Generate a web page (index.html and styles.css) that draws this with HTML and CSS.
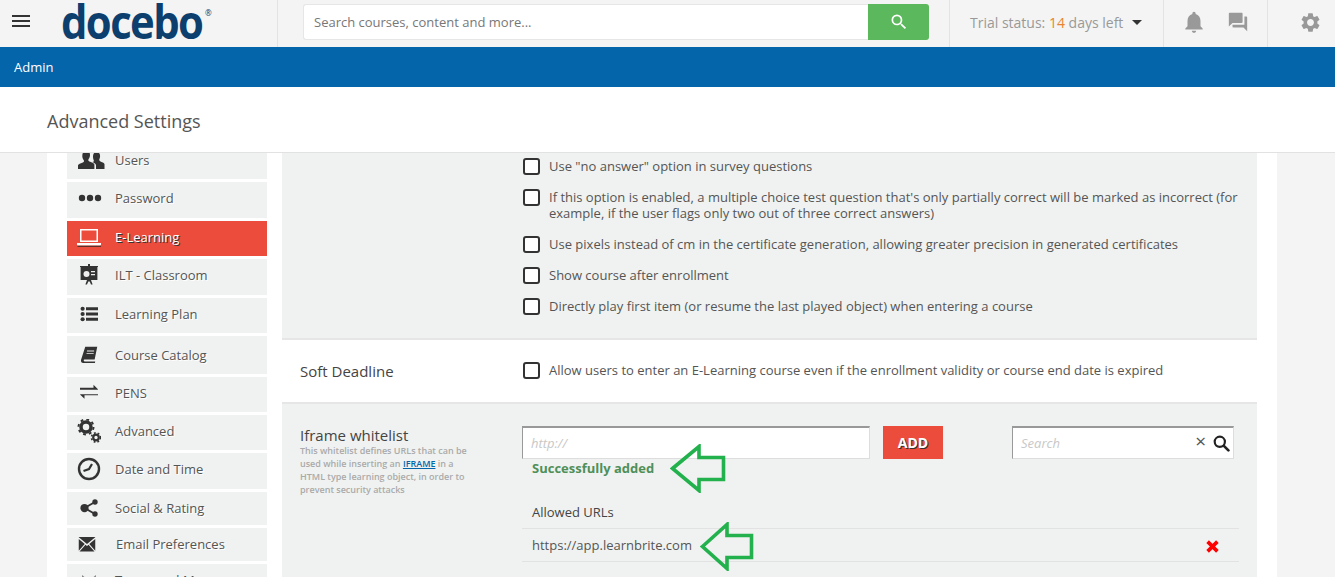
FILE: index.html
```html
<!DOCTYPE html>
<html lang="en">
<head>
<meta charset="utf-8">
<title>Advanced Settings</title>
<link rel="stylesheet" href="styles.css">
</head>
<body>
<header class="topbar">
  <div class="brand">
    <div class="burger"><span></span><span></span><span></span></div>
    <div class="logo">docebo<sup class="reg">®</sup></div>
  </div>
  <div class="searchbox">
    <input class="search-input" type="text" placeholder="Search courses, content and more...">
    <button class="search-btn" type="button"><svg viewBox="0 0 24 24" width="20" height="20"><path fill="#fff" d="M15.5 14h-.79l-.28-.27A6.471 6.471 0 0016 9.5 6.5 6.5 0 109.5 16c1.61 0 3.09-.59 4.23-1.57l.27.28v.79l5 4.99L20.49 19l-4.99-5zm-6 0C7.01 14 5 11.99 5 9.5S7.01 5 9.5 5 14 7.01 14 9.5 11.99 14 9.5 14z"/></svg></button>
  </div>
  <div class="trial"><span>Trial status: <span class="trial-num">14</span> days left</span><i class="caret"></i></div>
  <div class="notify">
    <svg viewBox="0 0 24 24" width="26" height="26"><path fill="#999" d="M12 22c1.1 0 2-.9 2-2h-4c0 1.1.89 2 2 2zm6-6v-5c0-3.07-1.64-5.64-4.5-6.32V4c0-.83-.67-1.5-1.5-1.5s-1.5.67-1.5 1.5v.68C7.63 5.36 6 7.92 6 11v5l-2 2v1h16v-1l-2-2z"/></svg>
    <svg viewBox="0 0 24 24" width="22" height="22"><path fill="#999" d="M21 6h-2v9H6v2c0 .55.45 1 1 1h11l4 4V7c0-.55-.45-1-1-1zm-4 6V3c0-.55-.45-1-1-1H3c-.55 0-1 .45-1 1v14l4-4h10c.55 0 1-.45 1-1z"/></svg>
  </div>
  <div class="gear">
    <svg viewBox="0 0 24 24" width="23" height="23"><path fill="#999" d="M19.14 12.94c.04-.3.06-.61.06-.94 0-.32-.02-.64-.07-.94l2.03-1.58a.49.49 0 00.12-.61l-1.92-3.32a.488.488 0 00-.59-.22l-2.39.96c-.5-.38-1.03-.7-1.62-.94l-.36-2.54a.484.484 0 00-.48-.41h-3.84c-.24 0-.43.17-.47.41l-.36 2.54c-.59.24-1.13.57-1.62.94l-2.39-.96c-.22-.08-.47 0-.59.22L2.74 8.87c-.12.21-.08.47.12.61l2.03 1.58c-.05.3-.09.63-.09.94s.02.64.07.94l-2.03 1.58a.49.49 0 00-.12.61l1.92 3.32c.12.22.37.29.59.22l2.39-.96c.5.38 1.03.7 1.62.94l.36 2.54c.05.24.24.41.48.41h3.84c.24 0 .44-.17.47-.41l.36-2.54c.59-.24 1.13-.56 1.62-.94l2.39.96c.22.08.47 0 .59-.22l1.92-3.32c.12-.22.07-.47-.12-.61l-2.01-1.58zM12 15.6c-1.98 0-3.6-1.62-3.6-3.6s1.62-3.6 3.6-3.6 3.6 1.62 3.6 3.6-1.62 3.6-3.6 3.6z"/></svg>
  </div>
</header>
<nav class="adminbar">Admin</nav>
<div class="titlebar"><h1 class="title">Advanced Settings</h1></div>
<main class="main">
  <div class="panel">
    <aside class="sidebar">
      <a class="item item-users"><svg class="ico" viewBox="0 0 28 18"><path fill="#333" d="M1 18v-3.500c0-1.600 4-2.600 5.600-3.600.6-.4.5-1.400 0-2-.9-1.100-1.300-2.600-1.300-4C5.300 1.300 7 0 9.200 0S13 1.300 13 3.900c0 1.400-.4 2.900-1.300 4-.5.6-.6 1.600 0 2 1.600 1 5.700 2 5.700 3.600V18z"/><path fill="#333" d="M19 18v-3.700c0-1.300-1.800-2.400-3.400-3.200.9-.5 1.400-.5 1.200-1.500-.5-1.200-.8-2.500-.8-3.700C16 2.500 17.500 1 19.600 1s3.500 1.500 3.500 3.900c0 1.200-.3 2.500-.8 3.700-.3.8.1 1.200.8 1.600 1.600.9 4.400 1.500 4.400 3V18z"/></svg><span>Users</span></a>
      <a class="item item-up item-dots"><svg class="ico" viewBox="0 0 24 24"><circle cx="4" cy="12" r="3.200" fill="#333"/><circle cx="12" cy="12" r="3.200" fill="#333"/><circle cx="20" cy="12" r="3.200" fill="#333"/></svg><span>Password</span></a>
      <a class="item item-active"><svg class="ico" viewBox="0 0 24 24"><g fill="#fff"><path d="M3 4h18v13H3zm1.500 1.500v10h15v-10z" fill-rule="evenodd"/><path d="M0 18h24v1.200c0 .7-.5 1.300-1.200 1.300H1.200C.5 20.500 0 19.900 0 19.200z"/></g><path fill="#222" d="M.5 20.800h23.500v.9H.5z"/></svg><span>E-Learning</span></a>
      <a class="item item-up"><svg class="ico" viewBox="0 0 24 24"><path fill="#333" d="M3 3h8V1h2v2h8v1h-.6v13H14l1.600 4.500H14l-1.300-3H11.300L10 21.500H8.400L10 17H3.600V4H3z"/><circle cx="9.500" cy="11" r="3" fill="#eee"/><path fill="#eee" d="M14 8h4v1.200h-4zm0 3h4v1.200h-4z"/></svg><span>ILT - Classroom</span></a>
      <a class="item item-sm"><svg class="ico" viewBox="0 0 24 24"><g fill="#333"><circle cx="3.500" cy="5" r="2.800"/><circle cx="3.500" cy="12" r="2.800"/><circle cx="3.500" cy="19" r="2.800"/><path d="M8 3h16v4H8zm0 7h16v4H8zm0 7h16v4H8z"/></g></svg><span>Learning Plan</span></a>
      <a class="item item-sm item-low"><svg class="ico" viewBox="0 0 24 24"><path fill="#333" d="M7 1h16l-3.500 17H6.500c-1.200 0-1.500.6-1.500 1.200 0 .8.500 1.300 1.500 1.300h13.800l-.4 2H5C2.500 23 1 21.300 1.300 18.500z"/><path fill="#eee" d="M9.300 6h9.500v1.200H9.300zm-.6 3.500h9.500v1.200H8.700z"/></svg><span>Course Catalog</span></a>
      <a class="item item-sm"><svg class="ico" viewBox="0 0 24 24"><g fill="#333"><path d="M0 5h18V1l6 6-.4.500H0z"/><path d="M24 15H6v4.500L0 14l.4-.500H24z"/></g></svg><span>PENS</span></a>
      <a class="item"><svg class="ico" viewBox="0 0 24 24"><g fill="none" stroke="#333"><circle cx="9" cy="8" r="5" stroke-width="3.500"/><circle cx="9" cy="8" r="7.500" stroke-width="2" stroke-dasharray="2.800 3.100"/><circle cx="19" cy="18.500" r="2.800" stroke-width="2.200"/><circle cx="19" cy="18.500" r="4.600" stroke-width="1.600" stroke-dasharray="1.800 2"/></g></svg><span>Advanced</span></a>
      <a class="item item-up"><svg class="ico" viewBox="0 0 24 24"><circle cx="12" cy="12" r="10" fill="none" stroke="#333" stroke-width="2.400"/><path fill="none" stroke="#333" stroke-width="2.200" d="M6.500 14l5.500-2 3-5"/></svg><span>Date and Time</span></a>
      <a class="item item-sm item-low"><svg class="ico" viewBox="0 0 24 24"><path fill="none" stroke="#333" stroke-width="2.500" d="M20 4L6 12l14 8"/><circle cx="6" cy="12" r="5.500" fill="#333"/><circle cx="20" cy="4" r="3.600" fill="#333"/><circle cx="20" cy="20" r="3.600" fill="#333"/></svg><span>Social &amp; Rating</span></a>
      <a class="item item-mail"><svg class="ico" viewBox="0 0 24 24"><path fill="#333" d="M1 3l11 9 11-9v-.5H1zM1 5.200V21l8-9zM23 5.200V21l-8-9zM10 13l-8 9h20l-8-9-2 1.700z"/></svg><span>Email Preferences</span></a>
      <a class="item item-last"><svg class="ico" viewBox="0 0 24 24"><path fill="#888" d="M5 4l5 4H5zm14 0l-5 4h5z"/></svg><span>Terms and Menu</span></a>
    </aside>
    <section class="content">
      <div class="sec sec-top">
        <div class="sec-label"></div>
        <div class="options">
          <label class="opt"><i class="box"></i><span>Use "no answer" option in survey questions</span></label>
          <label class="opt"><i class="box"></i><span>If this option is enabled, a multiple choice test question that's only partially correct will be marked as incorrect (for example, if the user flags only two out of three correct answers)</span></label>
          <label class="opt"><i class="box"></i><span>Use pixels instead of cm in the certificate generation, allowing greater precision in generated certificates</span></label>
          <label class="opt"><i class="box"></i><span>Show course after enrollment</span></label>
          <label class="opt"><i class="box"></i><span>Directly play first item (or resume the last played object) when entering a course</span></label>
        </div>
      </div>
      <div class="sec sec-soft">
        <div class="sec-label"><h3 class="soft-title">Soft Deadline</h3></div>
        <div class="options">
          <label class="opt"><i class="box"></i><span>Allow users to enter an E-Learning course even if the enrollment validity or course end date is expired</span></label>
        </div>
      </div>
      <div class="sec sec-iframe">
        <div class="sec-label">
          <h3 class="iframe-title">Iframe whitelist</h3>
          <p class="iframe-desc">This whitelist defines URLs that can be used while inserting an <a class="iframe-link">IFRAME</a> in a HTML type learning object, in order to prevent security attacks</p>
        </div>
        <div class="iframe-body">
          <div class="url-row">
            <input class="field field-url" type="text" placeholder="http://">
            <button class="add-btn" type="button">ADD</button>
            <div class="field field-search">
              <input class="search-inner" type="text" placeholder="Search">
              <span class="clear">×</span>
              <svg viewBox="0 0 18 18" width="17" height="17"><circle cx="7.200" cy="7.200" r="5.400" fill="none" stroke="#222" stroke-width="2.300"/><path stroke="#222" stroke-width="2.800" stroke-linecap="round" d="M11.500 11.500l4.800 4.800"/></svg>
            </div>
          </div>
          <div class="success">Successfully added</div>
          <div class="allowed">Allowed URLs</div>
          <div class="url-item">
            <span>https://app.learnbrite.com</span>
            <svg class="del" viewBox="0 0 12 12" width="13" height="13"><path stroke="#f00" stroke-width="3.400" d="M1.500 1.500l9 9m0-9l-9 9"/></svg>
          </div>
        </div>
      </div>
    </section>
  </div>
  <svg class="arrow arrow-one" viewBox="0 0 56 49" width="56" height="49"><path fill="none" stroke="#22b14c" stroke-width="3.600" d="M2.500 24.500L29 2.500v11h24.500v22H29V46.500z"/></svg>
  <svg class="arrow arrow-two" viewBox="0 0 54 49" width="54" height="49"><path fill="none" stroke="#22b14c" stroke-width="3.600" d="M2.500 24.500L27 2.500v11h24.500v22H27V46.500z"/></svg>
</main>
</body>
</html>
```
FILE: styles.css
```css
* { box-sizing: border-box; }
html, body { margin: 0; padding: 0; height: 577px; overflow: hidden; }
body { font-family: "Open Sans", "Liberation Sans", sans-serif; font-size: 13px; color: #555; background: #f4f4f4; }

.topbar { display: flex; height: 47px; background: #f4f4f4; }
.brand { display: flex; width: 278px; border-right: 1px solid #e3e3e3; }
.burger { display: flex; flex-direction: column; justify-content: space-between; width: 18px; height: 12px; margin: 15px 0 0 12px; }
.burger span { display: block; height: 2px; background: #333; }
.logo { margin: -7px 0 0 31px; height: 56px; font-size: 47px; line-height: 56px; font-weight: 700; letter-spacing: -1.8px; color: #0c3f6e; white-space: nowrap; transform: scaleX(.89); transform-origin: left top; }
.reg { font-size: 9px; font-weight: 400; letter-spacing: 0; vertical-align: 23px; line-height: 0; margin-left: 3px; }

.searchbox { display: flex; width: 626px; height: 36px; margin: 4px 20px 0 25px; }
.search-input { flex: 1; height: 36px; padding: 0 10px; border: 1px solid #e6e6e6; border-right: 0; border-radius: 3px 0 0 3px; background: #fff; font: 13px "Open Sans", sans-serif; color: #555; }
.search-input::placeholder { color: #777; opacity: 1; }
.search-btn { display: flex; align-items: center; justify-content: center; width: 61px; height: 36px; padding: 0; border: 0; border-radius: 0 3px 3px 0; background: #5cb85c; }

.trial { display: flex; align-items: center; width: 214px; height: 47px; padding: 0 0 3px 20px; border-left: 1px solid #e3e3e3; font-size: 14px; color: #999; white-space: pre; }
.trial-num { color: #e8842c; }
.caret { width: 0; height: 0; margin-left: 9px; border-left: 5px solid transparent; border-right: 5px solid transparent; border-top: 5px solid #333; }
.notify { display: flex; align-items: center; gap: 20px; width: 104px; height: 47px; padding: 0 0 3px 17px; border-left: 1px solid #e3e3e3; }
.gear { display: flex; align-items: center; flex: 1; height: 47px; padding: 0 0 3px 31px; border-left: 1px solid #e3e3e3; }

.adminbar { display: flex; align-items: center; height: 40px; padding-left: 14px; background: #0565aa; color: #fff; font-size: 13px; }
.titlebar { display: flex; align-items: center; height: 66px; padding: 3px 0 0 47px; background: #fff; border-bottom: 1px solid #e2e2e2; }
.title { margin: 0; font-size: 18px; font-weight: 400; color: #555; }

.main { position: relative; height: 424px; overflow: hidden; }
.panel { display: grid; grid-template-columns: 200px 975px; column-gap: 15px; width: 1230px; height: 424px; margin-left: 47px; padding: 0 20px; background: #fff; }

.sidebar { display: grid; grid-template-rows: 26px 36px 35px 36px 35px 38px 35px 35px 36px 33px 33px 40px; row-gap: 3px; align-content: start; }
.item { display: flex; align-items: center; gap: 14px; padding: 0 0 3px 10px; background: #f0f2f1; color: #555; text-shadow: 1px 1px 0 #fff; overflow: hidden; }
.ico { flex: none; width: 24px; height: 24px; }
.item-up { padding-bottom: 4px; }
.item-low { padding-bottom: 1px; }
.item-dots .ico { margin: 0 -1px 0 1px; }
.item-sm { gap: 17px; padding-left: 13px; }
.item-sm .ico { width: 18px; height: 18px; }
.item-users { gap: 10px; padding-bottom: 12px; }
.item-users .ico { width: 28px; height: 18px; }
.item-active { background: #eb4c3c; color: #fff; text-shadow: 1px 1px 0 #333; }
.item-mail { gap: 20px; padding: 0 0 2px 11px; }
.item-mail .ico { width: 18px; height: 18px; }
.item-last { align-items: flex-start; padding-top: 7px; }

.sec { display: grid; grid-template-columns: 240px 1fr; }
.sec-label { padding-left: 18px; }
.options { display: flex; flex-direction: column; gap: 14px; padding-left: 1px; }
.opt { display: flex; gap: 9px; line-height: 16px; min-height: 17px; color: #555; }
.box { flex: none; width: 17px; height: 17px; border: 2px solid #333; border-radius: 3px; background: #fff; }
.opt span { padding-bottom: 1px; padding-right: 18px; }

.sec-top { height: 187px; padding-top: 5px; background: #f0f2f1; border-bottom: 2px solid #e6e6e6; }
.sec-soft { height: 64px; padding-top: 22px; background: #fff; border-bottom: 2px solid #e6e6e6; }
.soft-title { margin: 0; font-size: 15px; line-height: 18px; font-weight: 500; color: #444; }
.sec-iframe { height: 173px; padding-top: 22px; background: #f0f2f1; }
.iframe-title { margin: 0; font-size: 15px; line-height: 18px; font-weight: 500; color: #444; }
.iframe-desc { margin: 0; width: 170px; font-size: 9px; line-height: 13px; font-weight: 600; color: #aaa; }
.iframe-link { color: #0565aa; text-decoration: underline; }

.iframe-body { padding-right: 18px; }
.url-row { display: flex; height: 33px; }
.field { height: 33px; border: 1px solid #ddd; border-top: 2px solid #999; border-left: 1px solid #999; background: #fff; font: italic 13px "Open Sans", sans-serif; }
.field-url { width: 348px; padding: 0 8px; }
.field::placeholder, .search-inner::placeholder { color: #c8c8c8; opacity: 1; }
.add-btn { width: 60px; height: 33px; margin-left: 13px; padding: 0; border: 0; background: #eb4c3c; color: #fff; font: 700 14px "Open Sans", sans-serif; text-shadow: 1px 1px 0 #333; }
.field-search { display: flex; align-items: center; width: 222px; margin-left: 69px; padding-right: 3px; }
.search-inner { flex: 1; min-width: 0; padding: 0 8px; border: 0; background: transparent; font: italic 13px "Open Sans", sans-serif; }
.clear { margin: -3px 7px 0 0; font: 400 19px/17px "Open Sans", sans-serif; color: #555; }
.success { margin: 0 0 0 10px; height: 18px; line-height: 18px; font-weight: 700; color: #4f8f58; }
.allowed { height: 52px; padding: 26px 0 0 10px; line-height: 18px; font-weight: 500; color: #444; border-bottom: 1px solid #e2e2e2; }
.url-item { display: flex; align-items: center; justify-content: space-between; height: 33px; padding: 0 20px 0 10px; border-bottom: 1px solid #e2e2e2; color: #555; }
.del { margin-top: 2px; }

.arrow { position: absolute; }
.arrow-one { left: 670px; top: 291px; }
.arrow-two { left: 700px; top: 369px; }
```
